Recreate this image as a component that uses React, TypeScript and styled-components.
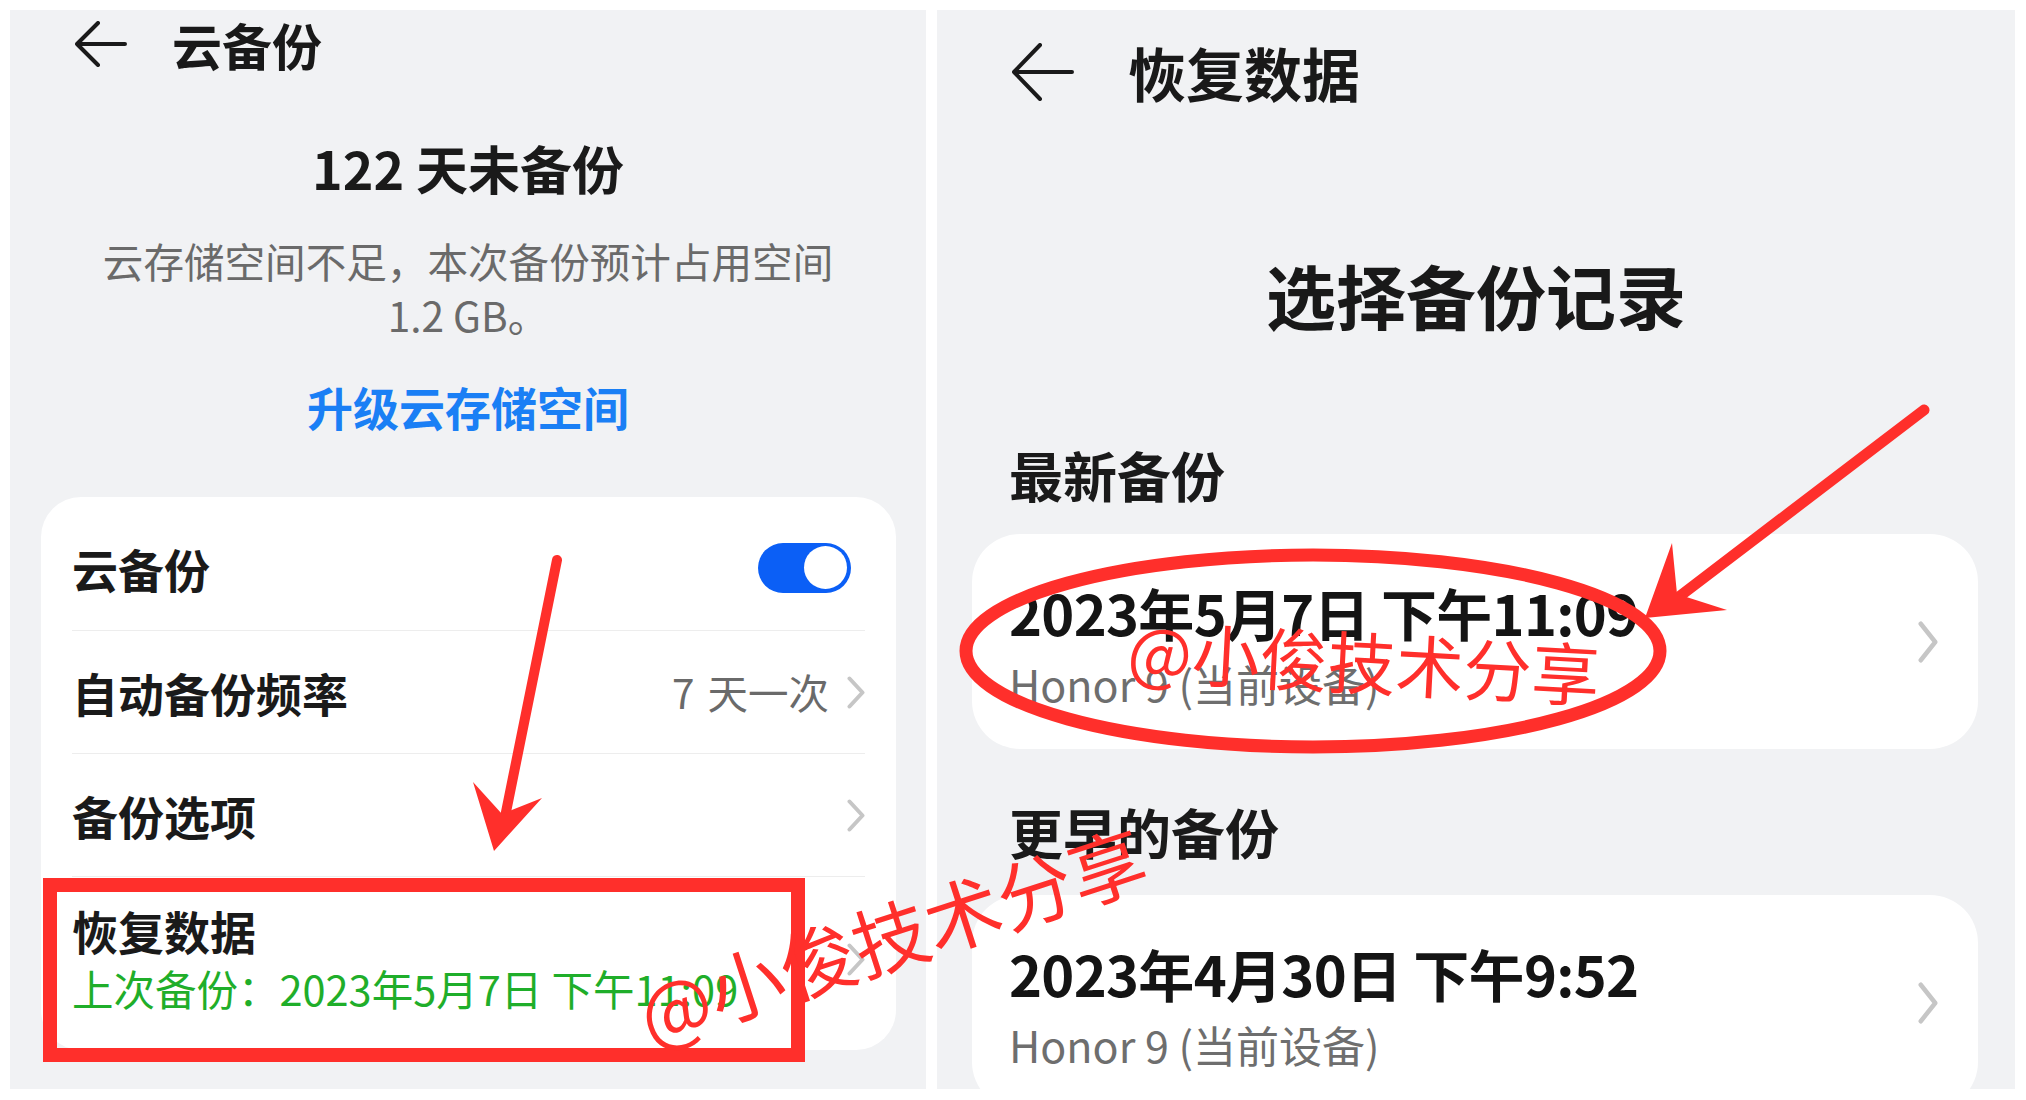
import React from "react";
import styled, { createGlobalStyle } from "styled-components";

const FONT = `"Noto Sans CJK SC", "Noto Sans", sans-serif`;
const RED = "#ff2f2b";

const Global = createGlobalStyle`
  html, body { margin: 0; padding: 0; background: #ffffff; }
  body { font-family: ${FONT}; }
  * { box-sizing: border-box; }
`;

const Page = styled.div`
  position: relative;
  width: 2026px;
  height: 1100px;
  padding: 10px 11px 11px 10px;
  display: flex;
  gap: 11px;
  background: #ffffff;
  overflow: hidden;
  font-family: ${FONT};
`;

const Panel = styled.section<{ $w: number; $clip?: boolean }>`
  width: ${(p) => p.$w}px;
  height: 1079px;
  flex-shrink: 0;
  background: #f1f2f4;
  display: flex;
  flex-direction: column;
  overflow: ${(p) => (p.$clip ? "hidden" : "visible")};
`;

const Header = styled.header<{ $h: number; $pl: number; $gap: number }>`
  height: ${(p) => p.$h}px;
  flex-shrink: 0;
  display: flex;
  align-items: center;
  padding-left: ${(p) => p.$pl}px;
  gap: ${(p) => p.$gap}px;
`;

const HeaderTitle = styled.h1<{ $size: number }>`
  margin: 0;
  font-size: ${(p) => p.$size}px;
  line-height: 1;
  font-weight: 700;
  color: #191919;
`;

/* ---------- left screen ---------- */

const Summary = styled.div`
  display: flex;
  flex-direction: column;
  align-items: center;
  text-align: center;
`;

const DaysCount = styled.div`
  margin-top: 58px;
  font-size: 52px;
  line-height: 64px;
  font-weight: 700;
  color: #1a1a1a;
`;

const Notice = styled.p`
  margin: 34px 0 0;
  font-size: 40.6px;
  line-height: 54px;
  color: #6a6a6a;
`;

const UpgradeLink = styled.a`
  margin-top: 34px;
  font-size: 46px;
  line-height: 60px;
  font-weight: 700;
  color: #1a7ff5;
  text-decoration: none;
`;

const SettingsCard = styled.div`
  margin: 61px 30px 0 31px;
  padding: 8px 31px 0;
  background: #ffffff;
  border-radius: 40px;
  display: flex;
  flex-direction: column;
`;

const SettingRow = styled.div<{ $h: number; $divider?: boolean; $pb?: number }>`
  height: ${(p) => p.$h}px;
  display: flex;
  align-items: center;
  border-top: ${(p) => (p.$divider ? "1px solid #ededed" : "none")};
  padding-bottom: ${(p) => p.$pb ?? 0}px;
`;

const RowLabel = styled.div`
  flex: 1;
  font-size: 46px;
  line-height: 56px;
  font-weight: 700;
  color: #1a1a1a;
`;

const RowStack = styled.div`
  flex: 1;
  display: flex;
  flex-direction: column;
`;

const RowSub = styled.div`
  font-size: 41.5px;
  line-height: 60px;
  color: #1fae2a;
  white-space: nowrap;
`;

const RowValue = styled.span`
  font-size: 40.5px;
  line-height: 56px;
  color: #6a6a6a;
  margin-right: 18px;
  word-spacing: 4px;
`;

const Toggle = styled.span`
  width: 93px;
  height: 50px;
  margin-right: 14px;
  border-radius: 25px;
  background: #0b5ff6;
  display: flex;
  align-items: center;
  justify-content: flex-end;
  padding: 0 4px;
`;

const Knob = styled.span`
  width: 43px;
  height: 43px;
  border-radius: 50%;
  background: #ffffff;
`;

/* ---------- right screen ---------- */

const PageTitle = styled.h2`
  margin: 116px 0 0;
  font-size: 70px;
  line-height: 90px;
  font-weight: 700;
  color: #191919;
  text-align: center;
`;

const SectionLabel = styled.h3<{ $mt: number }>`
  margin: ${(p) => p.$mt}px 0 0;
  padding-left: 72px;
  font-size: 54px;
  line-height: 70px;
  font-weight: 700;
  color: #1a1a1a;
`;

const RecordCard = styled.div<{ $mt: number }>`
  margin: ${(p) => p.$mt}px 37px 0 35px;
  height: 215px;
  flex-shrink: 0;
  background: #ffffff;
  border-radius: 48px;
  display: flex;
  align-items: center;
  padding: 0 40px 0 37px;
`;

const RecordText = styled.div`
  flex: 1;
  display: flex;
  flex-direction: column;
  padding-top: 10px;
`;

const RecordTime = styled.div`
  font-size: 56px;
  line-height: 64px;
  font-weight: 700;
  color: #141414;
  letter-spacing: -0.7px;
  white-space: nowrap;
`;

const RecordDevice = styled.div`
  margin-top: 9px;
  font-size: 43px;
  line-height: 60px;
  color: #6e6e6e;
  white-space: nowrap;
`;

/* ---------- annotations ---------- */

const Overlay = styled.svg`
  position: absolute;
  left: 0;
  top: 0;
  width: 2026px;
  height: 1100px;
  pointer-events: none;
`;

const HighlightBox = styled.div`
  position: absolute;
  left: 43px;
  top: 878px;
  width: 762px;
  height: 184px;
  border: 14px solid ${RED};
  pointer-events: none;
`;

const Watermark = styled.span<{ $x: number; $y: number; $size: number; $deg: number }>`
  position: absolute;
  left: ${(p) => p.$x}px;
  top: ${(p) => p.$y}px;
  font-size: ${(p) => p.$size}px;
  line-height: 1;
  font-weight: 400;
  color: ${RED};
  white-space: nowrap;
  transform-origin: 0 50%;
  transform: rotate(${(p) => p.$deg}deg);
  pointer-events: none;
`;

/* ---------- icons ---------- */

const BackArrow = ({ w, h, head }: { w: number; h: number; head: number }) => (
  <svg width={w} height={h} viewBox={`0 0 ${w} ${h}`} fill="none">
    <path
      d={`M2 ${h / 2} H${w - 2} M${2 + head} 2 L2 ${h / 2} L${2 + head} ${h - 2}`}
      stroke="#1a1a1a"
      strokeWidth={4}
      strokeLinecap="round"
      strokeLinejoin="round"
    />
  </svg>
);

const Chevron = ({ w, h, sw }: { w: number; h: number; sw: number }) => (
  <svg width={w} height={h} viewBox={`0 0 ${w} ${h}`} fill="none">
    <path
      d={`M${sw / 2 + 0.5} ${sw / 2 + 0.5} L${w - sw / 2 - 0.5} ${h / 2} L${sw / 2 + 0.5} ${h - sw / 2 - 0.5}`}
      stroke="#c6c6c6"
      strokeWidth={sw}
      strokeLinecap="round"
      strokeLinejoin="round"
    />
  </svg>
);

export default function App() {
  return (
    <>
      <Global />
      <Page>
        <Panel $w={916}>
          <Header $h={68} $pl={65} $gap={45}>
            <BackArrow w={52} h={46} head={21} />
            <HeaderTitle $size={50}>云备份</HeaderTitle>
          </Header>
          <Summary>
            <DaysCount>122 天未备份</DaysCount>
            <Notice>
              云存储空间不足，本次备份预计占用空间
              <br />
              1.2 GB。
            </Notice>
            <UpgradeLink href="#">升级云存储空间</UpgradeLink>
          </Summary>
          <SettingsCard>
            <SettingRow $h={125}>
              <RowLabel>云备份</RowLabel>
              <Toggle>
                <Knob />
              </Toggle>
            </SettingRow>
            <SettingRow $h={123} $divider>
              <RowLabel>自动备份频率</RowLabel>
              <RowValue>7 天一次</RowValue>
              <Chevron w={18} h={33} sw={4} />
            </SettingRow>
            <SettingRow $h={123} $divider>
              <RowLabel>备份选项</RowLabel>
              <Chevron w={18} h={33} sw={4} />
            </SettingRow>
            <SettingRow $h={174} $divider $pb={8}>
              <RowStack>
                <RowLabel>恢复数据</RowLabel>
                <RowSub>上次备份：2023年5月7日 下午11:09</RowSub>
              </RowStack>
              <Chevron w={18} h={33} sw={4} />
            </SettingRow>
          </SettingsCard>
        </Panel>

        <Panel $w={1078} $clip>
          <Header $h={124} $pl={75} $gap={54}>
            <BackArrow w={62} h={58} head={26} />
            <HeaderTitle $size={58}>恢复数据</HeaderTitle>
          </Header>
          <PageTitle>选择备份记录</PageTitle>
          <SectionLabel $mt={100}>最新备份</SectionLabel>
          <RecordCard $mt={24}>
            <RecordText>
              <RecordTime>2023年5月7日 下午11:09</RecordTime>
              <RecordDevice>Honor 9 (当前设备)</RecordDevice>
            </RecordText>
            <Chevron w={20} h={42} sw={4.5} />
          </RecordCard>
          <SectionLabel $mt={48}>更早的备份</SectionLabel>
          <RecordCard $mt={28}>
            <RecordText>
              <RecordTime>2023年4月30日 下午9:52</RecordTime>
              <RecordDevice>Honor 9 (当前设备)</RecordDevice>
            </RecordText>
            <Chevron w={20} h={42} sw={4.5} />
          </RecordCard>
        </Panel>

        <HighlightBox />
        <Overlay viewBox="0 0 2026 1100">
          <path d="M557 560 L504 822" stroke={RED} strokeWidth={10} strokeLinecap="round" />
          <polygon points="494,851 473,782 502,814 542,798" fill={RED} />
          <path d="M1924 410 L1680 596" stroke={RED} strokeWidth={11} strokeLinecap="round" />
          <polygon points="1645,618 1672,543 1677,594 1727,610" fill={RED} />
          <ellipse cx={1313} cy={651} rx={347} ry={96} fill="none" stroke={RED} strokeWidth={13} />
        </Overlay>
        <Watermark $x={640} $y={977} $size={76} $deg={-18}>
          @小俊技术分享
        </Watermark>
        <Watermark $x={1128} $y={614} $size={68} $deg={3}>
          @小俊技术分享
        </Watermark>
      </Page>
    </>
  );
}
